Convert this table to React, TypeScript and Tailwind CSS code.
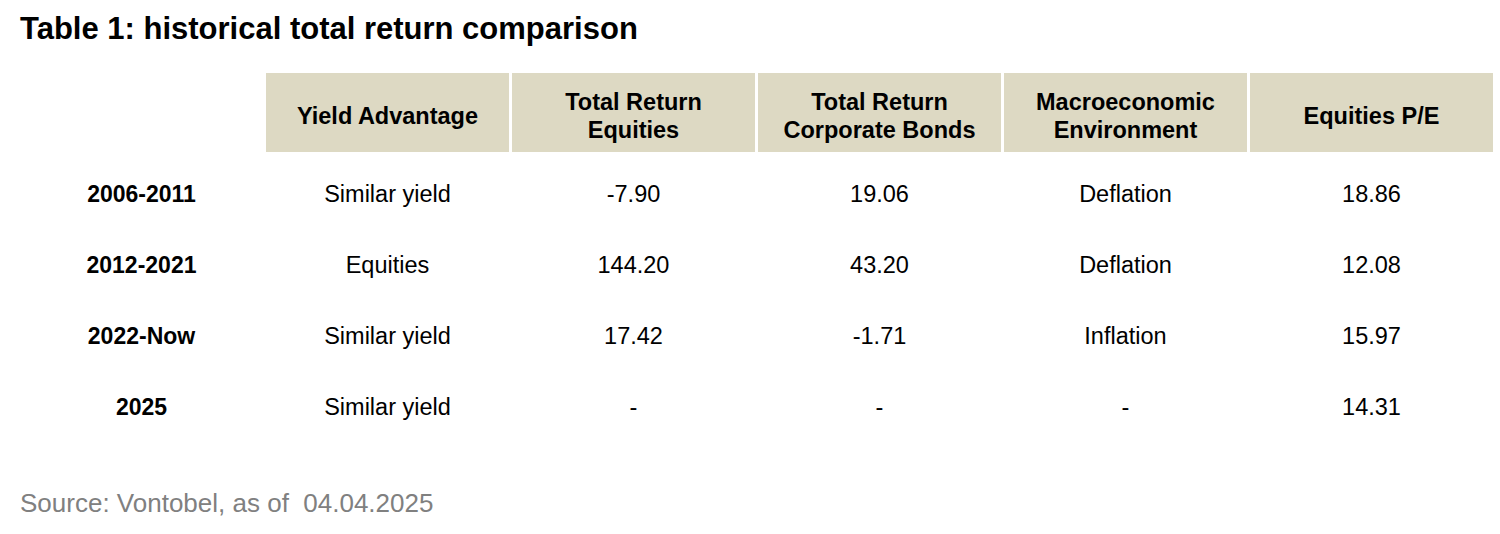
const headers = [
  ["Yield Advantage"],
  ["Total Return", "Equities"],
  ["Total Return", "Corporate Bonds"],
  ["Macroeconomic", "Environment"],
  ["Equities P/E"],
];

const rows = [
  ["2006-2011", "Similar yield", "-7.90", "19.06", "Deflation", "18.86"],
  ["2012-2021", "Equities", "144.20", "43.20", "Deflation", "12.08"],
  ["2022-Now", "Similar yield", "17.42", "-1.71", "Inflation", "15.97"],
  ["2025", "Similar yield", "-", "-", "-", "14.31"],
];

export default function App() {
  return (
    <main className="h-[534px] w-[1500px] bg-white font-['Liberation_Sans',Arial,sans-serif] text-black">
      <h1 className="pl-[20px] pt-[14px] text-[31px] font-bold leading-[30px]">
        Table 1: historical total return comparison
      </h1>

      <div className="mt-[29px] grid grid-cols-[243px_repeat(5,243px)] gap-x-[3px] pl-[20px]">
        <div />
        {headers.map((lines) => (
          <div
            key={lines.join(" ")}
            className="flex h-[79px] flex-col items-center justify-center bg-[#ddd9c3] pt-[6px] text-center text-[23.5px] font-bold leading-[28px]"
          >
            {lines.map((l) => (
              <span key={l}>{l}</span>
            ))}
          </div>
        ))}
      </div>

      <div className="mt-[7px] pl-[20px]">
        {rows.map((row) => (
          <div key={row[0]} className="grid h-[71px] grid-cols-[243px_repeat(5,243px)] items-center gap-x-[3px] text-[23.5px] leading-none">
            {row.map((cell, i) => (
              <div key={i} className={i === 0 ? "text-center text-[23px] font-bold" : "text-center"}>
                {cell}
              </div>
            ))}
          </div>
        ))}
      </div>

      <p className="mt-[45px] pl-[20px] text-[26px] leading-[30px] text-[#808080]">
        Source: Vontobel, as of&nbsp; 04.04.2025
      </p>
    </main>
  );
}
